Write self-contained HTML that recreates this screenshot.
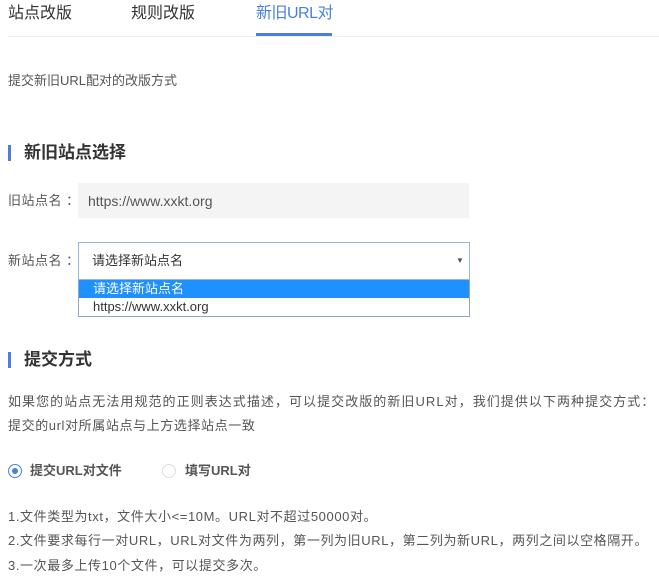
<!DOCTYPE html>
<html><head><meta charset="utf-8"><style>
body{margin:0;width:659px;height:588px;background:#fff;font-family:"Liberation Sans","Noto Sans CJK SC",sans-serif;color:#333;position:relative;overflow:hidden}
.a{position:absolute;white-space:nowrap;line-height:1.2}
.p{letter-spacing:0.6px}
</style></head><body>
<div class="a" style="left:8px;top:4px;font-size:16px;color:#333">站点改版</div>
<div class="a" style="left:131px;top:4px;font-size:16px;color:#333">规则改版</div>
<div class="a" style="left:256px;top:4px;font-size:16px;color:#4a7fe0;letter-spacing:-0.5px">新旧URL对</div>
<div class="a" style="left:8px;top:36px;width:651px;height:1px;background:#eee"></div>
<div class="a" style="left:256px;top:33px;width:76px;height:3px;background:#4a7fe0"></div>
<div class="a" style="left:8px;top:73px;font-size:13px;color:#555">提交新旧URL配对的改版方式</div>
<div class="a" style="left:8px;top:145px;width:3px;height:16px;background:#4a7fe0"></div>
<div class="a" style="left:24px;top:143px;font-size:17px;font-weight:bold;color:#333">新旧站点选择</div>
<div class="a" style="left:8px;top:193px;font-size:13px;color:#555;letter-spacing:0.5px">旧站点名 ：</div>
<div class="a" style="left:78px;top:183px;width:391px;height:35px;background:#f4f4f4"></div>
<div class="a" style="left:88px;top:193px;font-size:14px;color:#555">https://www.xxkt.org</div>
<div class="a" style="left:8px;top:253px;font-size:13px;color:#555;letter-spacing:0.5px">新站点名 ：</div>
<div class="a" style="left:78px;top:242px;width:390px;height:36px;border:1px solid #9ab6e0;background:#fff"></div>
<div class="a" style="left:92px;top:253px;font-size:13px;color:#333">请选择新站点名</div>
<div class="a" style="left:456px;top:256px;font-size:8px;color:#555">▼</div>
<div class="a" style="left:78px;top:280px;width:390px;height:36px;border:1px solid #9aa7bb;border-top:none;background:#fff"></div>
<div class="a" style="left:79px;top:280px;width:390px;height:18px;background:#1e90ff"></div>
<div class="a" style="left:93px;top:281px;font-size:13px;line-height:16px;color:#fff">请选择新站点名</div>
<div class="a" style="left:93px;top:299px;font-size:13px;line-height:16px;color:#333">https://www.xxkt.org</div>
<div class="a" style="left:8px;top:352px;width:3px;height:16px;background:#4a7fe0"></div>
<div class="a" style="left:24px;top:350px;font-size:17px;font-weight:bold;color:#333">提交方式</div>
<div class="a p" style="left:8px;top:394px;font-size:13px;color:#555;letter-spacing:1.05px">如果您的站点无法用规范的正则表达式描述，可以提交改版的新旧URL对，我们提供以下两种提交方式：</div>
<div class="a p" style="left:8px;top:418px;font-size:13px;color:#555">提交的url对所属站点与上方选择站点一致</div>
<div class="a" style="left:8px;top:464px;width:12px;height:12px;border:1px solid #4a7fe0;border-radius:50%"></div>
<div class="a" style="left:12px;top:468px;width:6px;height:6px;background:#4a7fe0;border-radius:50%"></div>
<div class="a" style="left:30px;top:463px;font-size:13px;font-weight:bold;color:#555">提交URL对文件</div>
<div class="a" style="left:162px;top:464px;width:12px;height:12px;border:1px solid #ddd;border-radius:50%"></div>
<div class="a" style="left:185px;top:463px;font-size:13px;font-weight:bold;color:#555">填写URL对</div>
<div class="a p" style="left:8px;top:509px;font-size:13px;color:#555">1.文件类型为txt，文件大小&lt;=10M。URL对不超过50000对。</div>
<div class="a p" style="left:8px;top:533px;font-size:13px;color:#555">2.文件要求每行一对URL，URL对文件为两列，第一列为旧URL，第二列为新URL，两列之间以空格隔开。</div>
<div class="a p" style="left:8px;top:558px;font-size:13px;color:#555">3.一次最多上传10个文件，可以提交多次。</div>
</body></html>
